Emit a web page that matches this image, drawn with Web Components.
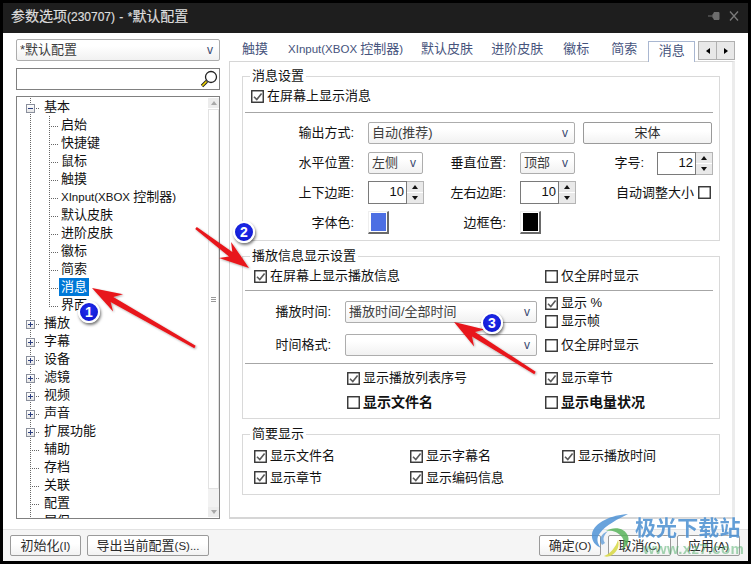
<!DOCTYPE html>
<html>
<head>
<meta charset="utf-8">
<style>
  html, body { margin: 0; background: #000; }
  body { width: 751px; height: 564px; overflow: hidden; }
</style>
</head>
<body>
<x-window>
  <x-titlebar slot="title">参数选项<x-lat style="font-size:12px;word-spacing:1px">(230707) - *</x-lat>默认配置</x-titlebar>
  <x-sidebar slot="left">
    <x-combo style="width:204px;height:22px">*默认配置</x-combo>
    <x-search></x-search>
    <x-tree>
      <x-node level="0" exp="-">基本</x-node>
      <x-node level="1">启始</x-node>
      <x-node level="1">快捷键</x-node>
      <x-node level="1">鼠标</x-node>
      <x-node level="1">触摸</x-node>
      <x-node level="1"><x-lat>XInput(XBOX </x-lat>控制器<x-lat>)</x-lat></x-node>
      <x-node level="1">默认皮肤</x-node>
      <x-node level="1">进阶皮肤</x-node>
      <x-node level="1">徽标</x-node>
      <x-node level="1">简索</x-node>
      <x-node level="1" selected>消息</x-node>
      <x-node level="1" last>界面</x-node>
      <x-node level="0" exp="+">播放</x-node>
      <x-node level="0" exp="+">字幕</x-node>
      <x-node level="0" exp="+">设备</x-node>
      <x-node level="0" exp="+">滤镜</x-node>
      <x-node level="0" exp="+">视频</x-node>
      <x-node level="0" exp="+">声音</x-node>
      <x-node level="0" exp="+">扩展功能</x-node>
      <x-node level="0">辅助</x-node>
      <x-node level="0">存档</x-node>
      <x-node level="0">关联</x-node>
      <x-node level="0">配置</x-node>
      <x-node level="0">屏保</x-node>
    </x-tree>
  </x-sidebar>
  <x-tabs slot="right">
    <x-tab slot="tabs" style="margin-left:13px">触摸</x-tab>
    <x-tab slot="tabs" style="margin-left:20px"><x-lat>XInput(XBOX </x-lat>控制器<x-lat>)</x-lat></x-tab>
    <x-tab slot="tabs" style="margin-left:18px">默认皮肤</x-tab>
    <x-tab slot="tabs" style="margin-left:18px">进阶皮肤</x-tab>
    <x-tab slot="tabs" style="margin-left:20px">徽标</x-tab>
    <x-tab slot="tabs" style="margin-left:22px">简索</x-tab>
    <x-tab slot="tabs" active style="margin-left:11px">消息</x-tab>

    <x-group title="消息设置" style="margin-top:14px;height:163px">
      <x-row style="margin-top:8px;padding-left:8px"><x-check checked>在屏幕上显示消息</x-check></x-row>
      <x-sep style="margin-top:5px"></x-sep>
      <x-row style="margin-top:9px">
        <x-label style="width:112px">输出方式:</x-label>
        <x-combo style="width:207px;margin-left:13px;height:22px">自动(推荐)</x-combo>
        <x-button style="width:129px;margin-left:8px;height:22px">宋体</x-button>
      </x-row>
      <x-row style="margin-top:8px">
        <x-label style="width:112px">水平位置:</x-label>
        <x-combo style="width:55px;margin-left:13px;height:22px">左侧</x-combo>
        <x-label style="width:84px">垂直位置:</x-label>
        <x-combo style="width:55px;margin-left:13px;height:22px">顶部</x-combo>
        <x-label style="width:70px">字号:</x-label>
        <x-spin value="12" style="margin-left:12px"></x-spin>
      </x-row>
      <x-row style="margin-top:7px;height:23px">
        <x-label style="width:112px">上下边距:</x-label>
        <x-spin value="10" style="margin-left:13px"></x-spin>
        <x-label style="width:83px">左右边距:</x-label>
        <x-spin value="10" style="margin-left:13px"></x-spin>
        <x-label plain style="width:119px">自动调整大小</x-label>
        <x-check style="margin-left:3px"></x-check>
      </x-row>
      <x-row style="margin-top:7px;height:23px">
        <x-label style="width:112px">字体色:</x-label>
        <x-swatch color="#4d6fe3" style="margin-left:13px"></x-swatch>
        <x-label style="width:118px">边框色:</x-label>
        <x-swatch color="#000" style="margin-left:13px"></x-swatch>
      </x-row>
    </x-group>

    <x-group title="播放信息显示设置" style="margin-top:15px;height:161px">
      <x-row style="margin-top:8px;padding-left:11px">
        <x-check checked style="width:291px">在屏幕上显示播放信息</x-check>
        <x-check>仅全屏时显示</x-check>
      </x-row>
      <x-sep style="margin-top:3px"></x-sep>
      <x-row style="margin-top:3px;height:36px">
        <x-label style="width:89px">播放时间:</x-label>
        <x-combo style="width:192px;margin-left:13px;height:22px">播放时间/全部时间</x-combo>
        <x-stack style="margin-left:8px">
          <x-check checked>显示 %</x-check>
          <x-check>显示帧</x-check>
        </x-stack>
      </x-row>
      <x-row style="margin-top:4px">
        <x-label style="width:89px">时间格式:</x-label>
        <x-combo style="width:192px;margin-left:13px;height:22px"></x-combo>
        <x-check style="margin-left:8px">仅全屏时显示</x-check>
      </x-row>
      <x-sep style="margin-top:7px"></x-sep>
      <x-row style="margin-top:3px;padding-left:104px">
        <x-check checked style="width:198px">显示播放列表序号</x-check>
        <x-check checked>显示章节</x-check>
      </x-row>
      <x-row style="margin-top:2px;padding-left:104px">
        <x-check bold style="width:198px">显示文件名</x-check>
        <x-check bold>显示电量状况</x-check>
      </x-row>
    </x-group>

    <x-group title="简要显示" style="margin-top:15px;height:59px">
      <x-row style="margin-top:10px;padding-left:11px">
        <x-check checked style="width:156px">显示文件名</x-check>
        <x-check checked style="width:152px">显示字幕名</x-check>
        <x-check checked>显示播放时间</x-check>
      </x-row>
      <x-row style="height:21px;padding-left:11px">
        <x-check checked style="width:156px">显示章节</x-check>
        <x-check checked>显示编码信息</x-check>
      </x-row>
    </x-group>
  </x-tabs>
  <x-footer slot="footer">
    <x-button style="width:71px;height:21px">初始化<x-lat>(I)</x-lat></x-button>
    <x-button style="width:122px;height:21px;margin-left:6px">导出当前配置<x-lat>(S)...</x-lat></x-button>
    <x-button style="width:62px;height:21px;margin-left:auto">确定<x-lat>(O)</x-lat></x-button>
    <x-button style="width:63px;height:21px;margin-left:7px">取消<x-lat>(C)</x-lat></x-button>
    <x-button style="width:63px;height:21px;margin-left:6px">应用<x-lat>(A)</x-lat></x-button>
  </x-footer>
</x-window>
<x-marks></x-marks>
<x-watermark></x-watermark>

<script>
function define(name, css, html) {
  customElements.define(name, class extends HTMLElement {
    constructor() {
      super();
      this.attachShadow({ mode: 'open' });
    }
    connectedCallback() {
      const body = typeof html === 'function' ? html(this) : html;
      this.shadowRoot.innerHTML = `<style>${css}</style>${body}`;
    }
  });
}

define('x-window', `
  :host { display: flex; flex-direction: column; width: 745px; height: 558px; margin: 3px 0 0 3px;
    background: #fff; color: #111; font: 13px/18px "Liberation Sans", "Noto Sans CJK SC", sans-serif; }
  .main { display: flex; height: 496px; }
`, `
  <slot name="title"></slot>
  <div class="main"><slot name="left"></slot><slot name="right"></slot></div>
  <slot name="footer"></slot>
`);

// latin runs are narrower than the CJK text around them
define('x-lat', `
  :host { display: inline; font-size: 11.5px; white-space: pre; }
`, `<slot></slot>`);

define('x-titlebar', `
  :host { display: flex; align-items: center; box-sizing: border-box; height: 30px; flex: none; background: #1e1e1e; color: #dcdcdc;
    padding: 0 9px 4px 8px; font-size: 14px; -webkit-text-stroke: .2px #dcdcdc; white-space: pre; }
  .sp { flex: 1; }
  svg { display: block; }
`, `
  <span><slot></slot></span><span class="sp"></span>
  <svg width="33" height="12" viewBox="0 0 33 12">
    <path d="M2 6h5M7 4h1v4H7zM8 2.5h5v7H8z" fill="#6e6e6e" stroke="#6e6e6e"/>
    <path d="M24 1.5l8 9M32 1.5l-8 9" stroke="#7a7a7a" stroke-width="1.3" fill="none"/>
  </svg>
`);

define('x-sidebar', `
  :host { display: flex; flex-direction: column; width: 204px; margin: 6px 0 0 13px; }
  ::slotted(x-search) { margin-top: 7px; }
  ::slotted(x-tree) { margin-top: 6px; }
`, `<slot></slot>`);

define('x-combo', `
  :host { display: flex; align-items: center; box-sizing: border-box; border: 1px solid #adadad; border-radius: 2px;
    background: linear-gradient(#fff 30%, #f1f1f1); padding: 0 6px 0 3px; color: #3c3c3c; flex: none; position: relative; }
  .t { flex: 1; white-space: nowrap; overflow: hidden; }
  .v { font-size: 12px; color: #3a4a70; }
`, `<span class="t"><slot></slot></span><span class="v">v</span>`);

define('x-search', `
  :host { display: flex; justify-content: flex-end; align-items: center; box-sizing: border-box; height: 22px;
    border: 1px solid #808080; padding-right: 1px; }
  svg { display: block; }
`, `
  <svg width="18" height="18" viewBox="0 0 18 18">
    <circle cx="11" cy="7" r="5.5" fill="#fff" stroke="#222" stroke-width="1.3"/>
    <path d="M6.8 11.2L2 16" stroke="#222" stroke-width="3.4"/>
    <path d="M6.5 11.5L2.3 15.7" stroke="#f2d600" stroke-width="1.6"/>
  </svg>
`);

define('x-tree', `
  :host { display: flex; box-sizing: border-box; height: 423px; border: 1px solid #808080; overflow: hidden; }
  .rows { flex: 1; padding-top: 1px; overflow: hidden; }
  .bar { display: flex; flex-direction: column; width: 11px; margin: 1px 0 1px 0; flex: none; }
  .btn { height: 10px; background: #ececec; display: flex; align-items: center; justify-content: center; flex: none; }
  .btn i { border: 3px solid transparent; }
  .up i { border-bottom: 4px solid #a8a8a8; border-top: 0; }
  .dn i { border-top: 4px solid #a8a8a8; border-bottom: 0; }
  .thumb { height: 380px; box-sizing: border-box; margin-top: 1px; border: 1px solid #e2e2e2; background: #fff;
    display: flex; align-items: center; justify-content: center; }
  .thumb i { width: 5px; height: 5px; background: repeating-linear-gradient(#9a9a9a 0 1px, #fff 1px 2px); }
  .track { flex: 1; background: #f2f2f2; }
`, `
  <div class="rows"><slot></slot></div>
  <div class="bar">
    <div class="btn up"><i></i></div>
    <div class="thumb"><i></i></div>
    <div class="track"></div>
    <div class="btn dn"><i></i></div>
  </div>
`);

const dotsV = 'repeating-linear-gradient(to bottom,#666 0 1px,transparent 1px 2px)';
const dotsH = 'repeating-linear-gradient(to right,#666 0 1px,transparent 1px 2px)';
define('x-node', `
  :host { display: flex; height: 18px; white-space: nowrap; }
  .a, .b { display: block; height: 18px; flex: none; position: relative; }
  .a { width: 25px; background: ${dotsV} 13px 0/1px 100% no-repeat; }
  .a.top { background: ${dotsV} 13px 0/1px 100% no-repeat, ${dotsH} 15px 10px/8px 1px no-repeat; }
  .b { width: 17px; background: ${dotsV} 7px 0/1px 100% no-repeat, ${dotsH} 9px 10px/9px 1px no-repeat; }
  .b.last { background: ${dotsV} 7px 0/1px 11px no-repeat, ${dotsH} 9px 10px/9px 1px no-repeat; }
  .box { position: absolute; left: 9px; top: 6px; width: 7px; height: 7px; border: 1px solid #8a8f9c;
    background: linear-gradient(#fff, #e6e6e6); }
  .box::before { content: ""; position: absolute; left: 1px; top: 3px; width: 5px; height: 1px; background: #2c3f80; }
  .box.plus::after { content: ""; position: absolute; left: 3px; top: 1px; width: 1px; height: 5px; background: #2c3f80; }
  .t { padding: 0 2px; height: 18px; }
  :host([selected]) .t { background: #0078d7; color: #fff; }
`, el => {
  const exp = el.getAttribute('exp');
  const box = exp ? `<i class="box ${exp === '+' ? 'plus' : ''}"></i>` : '';
  if (el.getAttribute('level') === '0') return `<span class="a top">${box}</span><span class="t"><slot></slot></span>`;
  const last = el.hasAttribute('last') ? 'last' : '';
  return `<span class="a"></span><span class="b ${last}"></span><span class="t"><slot></slot></span>`;
});

define('x-tabs', `
  :host { display: flex; flex-direction: column; width: 506px; margin-left: 9px; }
  .strip { display: flex; height: 28px; align-items: flex-end; flex: none; position: relative; }
  .scroll { display: flex; position: absolute; left: 469px; top: 8px; }
  .scroll b { width: 17px; height: 17px; border: 1px solid #b0b0b0; background: #e8e8e8; margin-right: -1px;
    display: flex; align-items: center; justify-content: center; }
  .scroll i { border: 3px solid transparent; }
  .l { border-right: 4px solid #000 !important; border-left: 0 !important; }
  .r { border-left: 4px solid #000 !important; border-right: 0 !important; }
  .pane { box-sizing: border-box; height: 458px; width: 506px; border: 1px solid #d6d6d6; border-width: 1px 3px 2px 1px;
    border-right-color: #ececec; padding-left: 12px; }
`, `
  <div class="strip"><slot name="tabs"></slot>
    <div class="scroll"><b><i class="l"></i></b><b><i class="r"></i></b></div>
  </div>
  <div class="pane"><slot></slot></div>
`);

define('x-tab', `
  :host { display: block; height: 28px; line-height: 32px; color: #46537c; white-space: nowrap; position: relative; z-index: 1; }
  :host([active]) { box-sizing: border-box; height: 21px; line-height: 17px; width: 47px; text-align: center;
    border: 1px solid #a9b7d1; border-bottom: 0; background: #fff; margin-bottom: -1px; }
`, `<slot></slot>`);

define('x-group', `
  :host { display: block; position: relative; width: 476px; border: 1px solid #d9d9d9; }
  .legend { position: absolute; left: 7px; top: -10px; background: #fff; padding: 0 2px; }
`, el => `<span class="legend">${el.getAttribute('title')}</span><slot></slot>`);

define('x-row', `
  :host { display: flex; align-items: center; height: 22px; white-space: nowrap; }
`, `<slot></slot>`);

define('x-stack', `
  :host { display: flex; flex-direction: column; }
`, `<slot></slot>`);

define('x-sep', `
  :host { display: block; height: 1px; width: 468px; margin-left: 2px; background: #a6a6a6; }
`, ``);

define('x-label', `
  :host { display: block; box-sizing: border-box; text-align: right; padding-right: 1px; flex: none; }
`, `<slot></slot>`);

define('x-button', `
  :host { display: flex; align-items: center; justify-content: center; box-sizing: border-box; flex: none;
    border: 1px solid #9a9a9a; border-radius: 2px; background: linear-gradient(#fff 40%, #f2f2f2); color: #2b2b2b; white-space: pre; }
  span { display: block; }
`, `<span><slot></slot></span>`);

define('x-spin', `
  :host { display: flex; width: 56px; height: 23px; flex: none; box-sizing: border-box; }
  .edit { flex: 1; border: 1px solid #7a7a7a; text-align: right; padding-right: 2px; line-height: 20px; box-sizing: border-box; }
  .btns { display: flex; flex-direction: column; width: 17px; box-sizing: border-box; border: 1px solid #b4b4b4; border-left: 0; flex: none; }
  .btns b { flex: 1; background: #e9e9e9; display: flex; align-items: center; justify-content: center; }
  .btns b + b { border-top: 1px solid #fff; }
  i { border: 3.5px solid transparent; }
  .u { border-bottom: 4px solid #111; border-top: 0; }
  .d { border-top: 4px solid #111; border-bottom: 0; }
`, el => `
  <div class="edit">${el.getAttribute('value')}</div>
  <div class="btns"><b><i class="u"></i></b><b><i class="d"></i></b></div>
`);

define('x-check', `
  :host { display: flex; align-items: center; height: 18px; flex: none; white-space: nowrap; }
  :host([bold]) { font-weight: 700; font-size: 14px; }
  svg { display: block; flex: none; margin-right: 3px; }
`, el => {
  const mark = el.hasAttribute('checked')
    ? '<path d="M3 6.8L5.8 9.6L10.6 3.6" fill="none" stroke="#5a5a5a" stroke-width="1.6"/>' : '';
  return `<svg width="13" height="13" viewBox="0 0 13 13">
    <rect x=".75" y=".75" width="11.5" height="11.5" fill="#fff" stroke="#333" stroke-width="1.4"/>${mark}</svg><slot></slot>`;
});

define('x-swatch', `
  :host { display: block; box-sizing: border-box; width: 21px; height: 23px; padding: 1px 1px 1px 2px; flex: none; background: #fff;
    border: 1px solid #eee; border-right: 2px solid #6a6a6a; border-bottom: 2px solid #6a6a6a; }
  div { width: 100%; height: 100%; }
`, el => `<div style="background:${el.getAttribute('color')}"></div>`);

define('x-footer', `
  :host { display: flex; box-sizing: border-box; height: 32px; flex: none; background: #f5f5f5; border-top: 1px solid #e2e2e2;
    padding: 5px 8px 0 7px; align-items: flex-start; }
`, `<slot></slot>`);

function arrow(tx, ty, sx, sy) {
  // barbed red arrow, tip at t, tail at s
  const len = Math.hypot(sx - tx, sy - ty), ux = (sx - tx) / len, uy = (sy - ty) / len, nx = -uy, ny = ux;
  const p = (a, w) => `${(tx + ux * a + nx * w).toFixed(1)},${(ty + uy * a + ny * w).toFixed(1)}`;
  return [p(0, 0), p(30, 10), p(23, 2.8), p(len, 1.4), p(len, -1.4), p(23, -2.8), p(30, -10)].join(' ');
}
define('x-marks', `
  :host { position: absolute; left: 0; top: 0; width: 751px; height: 564px; pointer-events: none; }
  svg { position: absolute; inset: 0; }
  .badge { position: absolute; width: 18px; height: 18px; border: 2px solid #fff; border-radius: 50%;
    background: radial-gradient(circle at 50% 40%, #2330f0, #0a12c8); color: #fff; font: 700 14px/18px "Liberation Sans", sans-serif;
    text-align: center; box-shadow: 1px 2px 3px rgba(0,0,0,.55); }
`, `
  <svg width="751" height="564" viewBox="0 0 751 564">
    <defs><filter id="s" x="-20%" y="-20%" width="140%" height="140%"><feDropShadow dx="1" dy="1" stdDeviation="1" flood-color="#000" flood-opacity=".35"/></filter></defs>
    <g fill="#e8161a" filter="url(#s)">
      <polygon points="${arrow(92, 288, 195, 347)}"/>
      <polygon points="${arrow(249, 268, 196, 228)}"/>
      <polygon points="${arrow(454, 322, 535, 373)}"/>
    </g>
  </svg>
  <span class="badge" style="left:78px;top:301px">1</span>
  <span class="badge" style="left:233px;top:221px">2</span>
  <span class="badge" style="left:481px;top:312px">3</span>
`);

define('x-watermark', `
  :host { position: absolute; left: 590px; top: 512px; width: 156px; height: 48px; pointer-events: none; }
  svg { position: absolute; left: 0; top: 0; }
  .cn { position: absolute; left: 45px; top: 0; font: 700 21px/28px "Noto Sans CJK SC", sans-serif; color: #4f92d2; opacity: .88;
    letter-spacing: .1px; white-space: nowrap; text-shadow: 0 0 2px #fff; }
  .en { position: absolute; left: 53px; top: 28px; font: 700 15px/18px "Liberation Sans", sans-serif; color: #4fae6a; opacity: .5;
    letter-spacing: .3px; white-space: nowrap; }
`, `
  <svg width="50" height="48" viewBox="0 0 50 48">
    <path d="M38 2C22 3 4 10 2 22C1 29 6 34 11 36C7 31 6 26 10 21C16 13 28 7 38 2z" fill="#4f93d6" opacity=".85"/>
    <path d="M12 33C8 27 11 22 18 19C14 23 12 27 15 31z" fill="#4f93d6" opacity=".7"/>
    <path d="M16 19C24 14 35 16 38 24C40 30 36 35 32 38C34 33 35 28 31 24C27 19 21 18 16 19z" fill="#57b35a" opacity=".85"/>
    <path d="M14 44C20 42 26 35 28 28C30 34 27 40 22 43C19 45 16 45 14 44z" fill="#d9d94a" opacity=".9"/>
  </svg>
  <span class="cn">极光下载站</span>
  <span class="en">www.xz7.com</span>
`);
</script>
</body>
</html>
